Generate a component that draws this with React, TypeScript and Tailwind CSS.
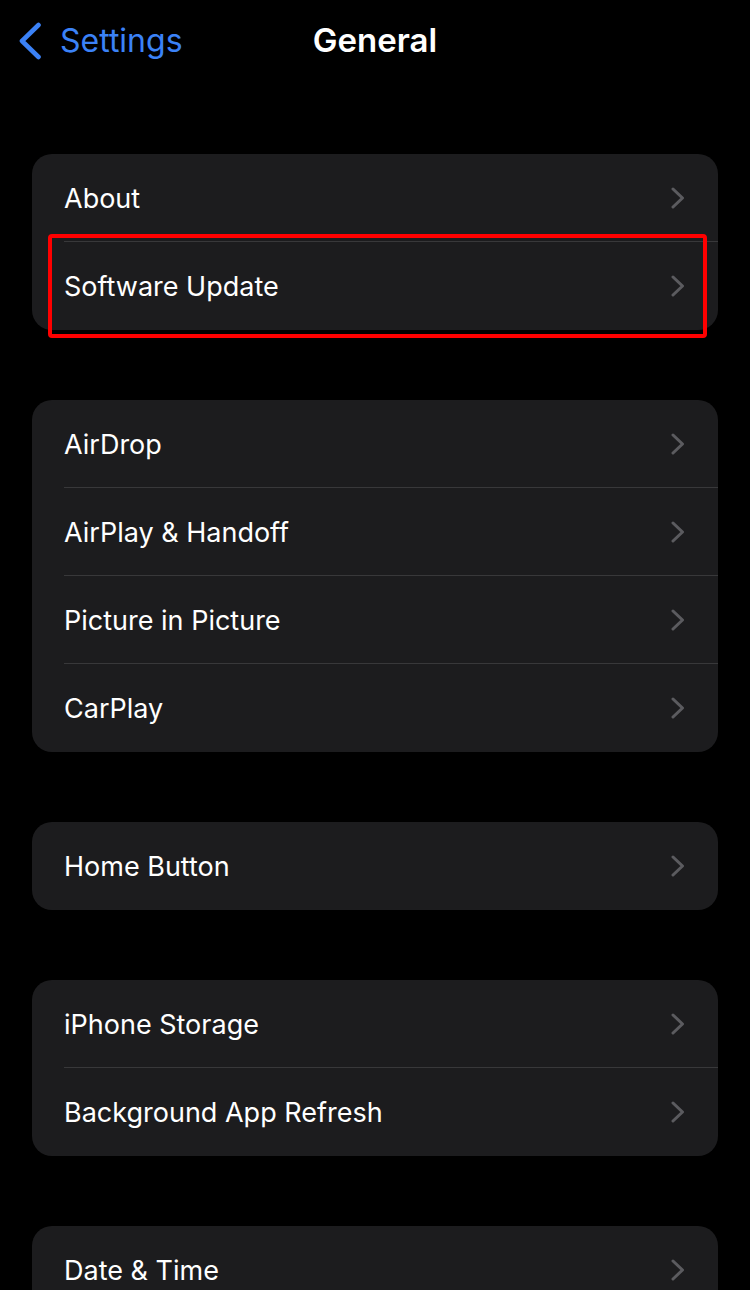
const groups = [
  ['About', 'Software Update'],
  ['AirDrop', 'AirPlay & Handoff', 'Picture in Picture', 'CarPlay'],
  ['Home Button'],
  ['iPhone Storage', 'Background App Refresh'],
  ['Date & Time', 'Keyboard'],
]

function Chevron() {
  return (
    <svg width="14" height="22" viewBox="0 0 14 22" fill="none">
      <path d="M2 2l9.5 9L2 20" stroke="#5b5b5f" strokeWidth="3" strokeLinecap="round" strokeLinejoin="round" />
    </svg>
  )
}

function Row({ label, last }: { label: string; last: boolean }) {
  return (
    <div className="flex h-[88px] items-stretch pl-8">
      <div className={`flex flex-1 items-center justify-between pr-[33px] ${last ? '' : 'border-b border-[#38383a]'}`}>
        <span className="mt-[3px] text-[27px] text-white">{label}</span>
        <Chevron />
      </div>
    </div>
  )
}

export default function App() {
  return (
    <div className="relative h-[1290px] w-[750px] overflow-hidden bg-black font-['Inter',sans-serif]">
      <div className="relative flex h-[82px] items-center">
        <div className="flex items-center pl-[18px] text-[#3b82f7]">
          <svg width="24" height="38" viewBox="0 0 24 38" fill="none">
            <path d="M20.5 3L4 19l16.5 16" stroke="currentColor" strokeWidth="4.6" strokeLinecap="round" strokeLinejoin="round" />
          </svg>
          <span className="ml-[18px] text-[32px]">Settings</span>
        </div>
        <span className="absolute left-0 right-0 text-center text-[33px] font-semibold text-white">General</span>
      </div>

      <div className="mt-[72px] flex flex-col gap-[70px] px-8">
        {groups.map((g, i) => (
          <div key={i} className="overflow-hidden rounded-[20px] bg-[#1c1c1e]">
            {g.map((label, j) => (
              <Row key={label} label={label} last={j === g.length - 1} />
            ))}
          </div>
        ))}
      </div>

      <div className="absolute left-[48px] top-[234px] h-[104px] w-[659px] rounded-[4px] border-[4px] border-[#ff0000]" />
    </div>
  )
}
